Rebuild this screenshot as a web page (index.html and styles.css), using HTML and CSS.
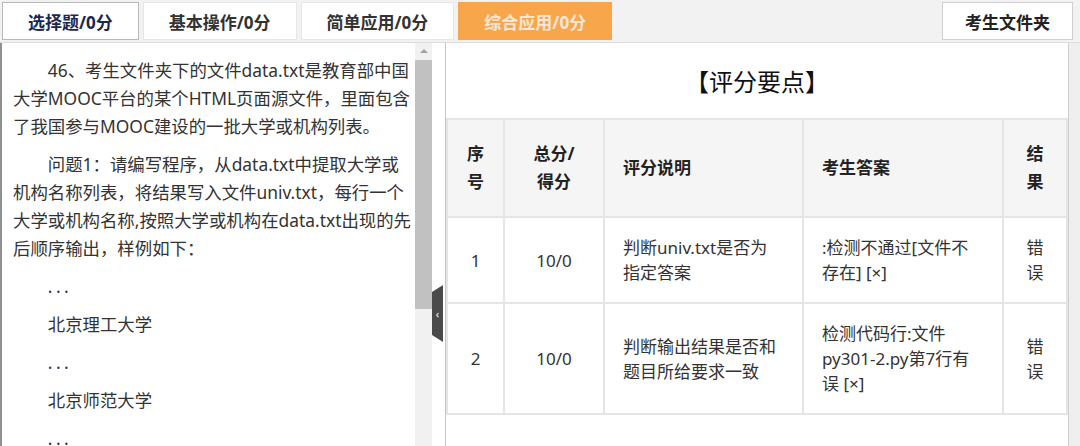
FILE: index.html
```html
<!DOCTYPE html>
<html lang="zh-CN">
<head>
  <meta charset="UTF-8">
  <meta name="viewport" content="width=device-width, initial-scale=1.0">
  <title>综合应用 - 评分</title>
  <link rel="stylesheet" href="styles.css">
</head>
<body>
  <div class="topbar">
    <div class="tab tab-first">选择题/0分</div>
    <div class="tab">基本操作/0分</div>
    <div class="tab">简单应用/0分</div>
    <div class="tab active">综合应用/0分</div>
    <div class="folder-btn">考生文件夹</div>
  </div>

  <div class="main">
    <div class="question">
      <div class="question-text">
        <p>46、考生文件夹下的文件data.txt是教育部中国大学MOOC平台的某个HTML页面源文件，里面包含了我国参与MOOC建设的一批大学或机构列表。</p>
        <p>问题1：请编写程序，从data.txt中提取大学或机构名称列表，将结果写入文件univ.txt，每行一个大学或机构名称,按照大学或机构在data.txt出现的先后顺序输出，样例如下：</p>
        <p class="dots">...</p>
        <p>北京理工大学</p>
        <p class="dots">...</p>
        <p>北京师范大学</p>
        <p class="dots">...</p>
      </div>
      <div class="scrollbar">
        <div class="scroll-up"></div>
        <div class="scroll-thumb"></div>
      </div>
    </div>

    <div class="divider">
      <div class="collapse-handle">‹</div>
    </div>

    <div class="result">
      <div class="result-body">
        <h2 class="result-title">【评分要点】</h2>
        <table class="score-table">
          <colgroup>
            <col style="width: 57px">
            <col style="width: 100px">
            <col style="width: 199px">
            <col style="width: 200px">
            <col>
          </colgroup>
          <thead>
            <tr>
              <th class="center">序号</th>
              <th class="center">总分/<br>得分</th>
              <th>评分说明</th>
              <th>考生答案</th>
              <th class="center">结果</th>
            </tr>
          </thead>
          <tbody>
            <tr>
              <td class="center">1</td>
              <td class="center">10/0</td>
              <td>判断univ.txt是否为指定答案</td>
              <td>:检测不通过[文件不存在] [×]</td>
              <td class="center">错误</td>
            </tr>
            <tr>
              <td class="center">2</td>
              <td class="center">10/0</td>
              <td>判断输出结果是否和题目所给要求一致</td>
              <td>检测代码行:文件py301-2.py第7行有误 [×]</td>
              <td class="center">错误</td>
            </tr>
          </tbody>
        </table>
      </div>
      <div class="result-scroll"></div>
    </div>
  </div>
</body>
</html>
```

FILE: styles.css
```css
* {
  margin: 0;
  padding: 0;
  box-sizing: border-box;
}

body {
  width: 1080px;
  height: 446px;
  overflow: hidden;
  font-family: "Noto Sans", "Noto Sans CJK SC", sans-serif;
  background: #f2f2f2;
  color: #333;
}

/* top tabs */
.topbar {
  height: 42px;
  display: flex;
  align-items: center;
  gap: 4px;
  padding: 0 7px 0 2px;
}

.tab {
  height: 38px;
  padding: 0 25px;
  display: flex;
  align-items: center;
  background: #fff;
  border: 1px solid #e6e6e6;
  font-size: 17px;
  font-weight: 700;
  color: #333;
}

.tab-first {
  border-color: #b8b8b8;
  color: #1d2754;
}

.tab.active {
  background: #f8a64c;
  border-color: #f8a64c;
  color: #fde6d8;
}

.folder-btn {
  margin-left: auto;
  height: 38px;
  padding: 0 22px;
  display: flex;
  align-items: center;
  background: #fff;
  border: 1px solid #cfcfcf;
  font-size: 17px;
  font-weight: 700;
  color: #222;
}

/* main area */
.main {
  display: flex;
  height: 404px;
  border-top: 1px solid #dcdcdc;
}

.question {
  width: 432px;
  display: flex;
  background: #fff;
  border-left: 2px solid #909090;
}

.question-text {
  flex: 1;
  padding: 13px 3px 0 11px;
  font-size: 17.4px;
  line-height: 28px;
  color: #333;
  overflow: hidden;
}

.question-text p {
  text-indent: 2em;
  margin-bottom: 10px;
}

.question-text .dots {
  letter-spacing: 3.5px;
}

.scrollbar {
  width: 17px;
  background: #f1f1f1;
  display: flex;
  flex-direction: column;
  align-items: center;
}

.scroll-up {
  width: 0;
  height: 0;
  border-left: 4px solid transparent;
  border-right: 4px solid transparent;
  border-bottom: 4px solid #a3a3a3;
  margin: 6px 0 7px;
}

.scroll-thumb {
  align-self: stretch;
  height: 249px;
  background: #c1c1c1;
}

.divider {
  width: 14px;
  background: #fff;
  border-right: 1px solid #c4c4c4;
  padding-top: 242px;
}

.collapse-handle {
  width: 11px;
  height: 57px;
  background: #4a4a4a;
  clip-path: polygon(0 7px, 100% 0, 100% 100%, 0 calc(100% - 7px));
  color: #fff;
  font-size: 11px;
  line-height: 1;
  display: flex;
  align-items: center;
  justify-content: center;
}

/* scoring panel */
.result {
  flex: 1;
  display: flex;
  background: #fff;
}

.result-body {
  flex: 1;
}

.result-title {
  height: 75px;
  display: flex;
  align-items: center;
  justify-content: center;
  font-size: 24px;
  font-weight: 400;
  color: #111;
}

.score-table {
  width: 100%;
  border-collapse: collapse;
  table-layout: fixed;
}

.score-table th,
.score-table td {
  border: 2px solid #e5e5e5;
  text-align: left;
  vertical-align: middle;
}

.score-table th {
  background: #f5f5f5;
  padding: 20px 18px;
  font-size: 17px;
  font-weight: 700;
  line-height: 28px;
  color: #222;
}

.score-table td {
  padding: 17px 25px 17px 18px;
  font-size: 17px;
  line-height: 25px;
  color: #333;
}

.score-table .center {
  text-align: center;
  padding-left: 18px;
  padding-right: 18px;
}

.result-scroll {
  width: 12px;
  background: #efefef;
  border-left: 1px solid #cfcfcf;
}
```
